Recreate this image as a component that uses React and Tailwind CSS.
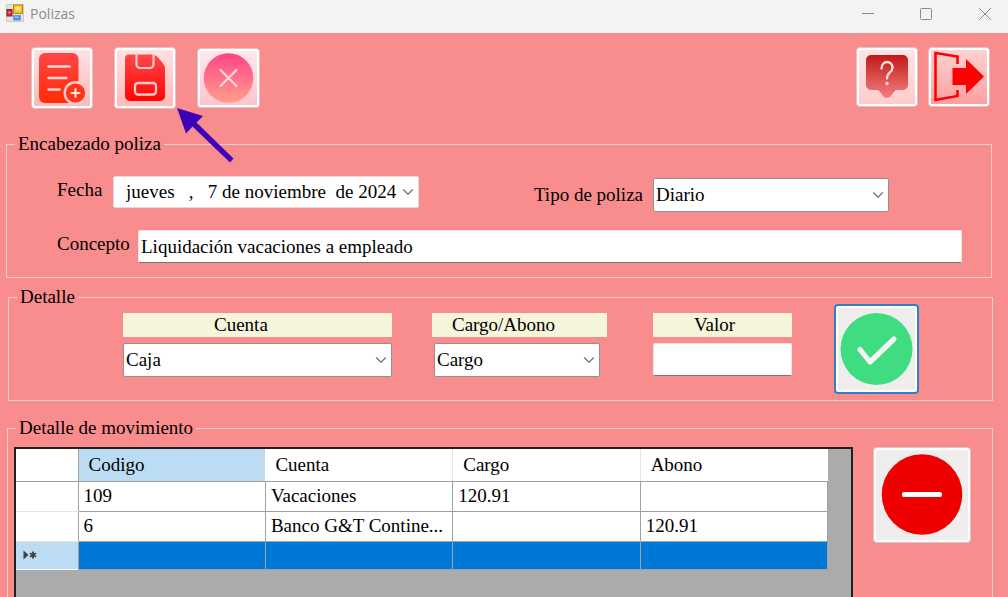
import React from 'react';
import { ChevronDown } from 'lucide-react';

const control = 'rounded-[2px] bg-white text-[19px] text-black outline-none';

function Legend({ children }) {
  return <legend className="ml-[8px] px-[3px] text-[19px] leading-[14px]">{children}</legend>;
}

function Combo({ id, options, className }) {
  return (
    <div className={`grid items-center ${className}`}>
      <select
        id={id}
        className={`${control} col-start-1 row-start-1 h-[34px] w-full appearance-none border border-[#949090] pr-8 pl-[2px]`}
      >
        {options.map((o) => (
          <option key={o}>{o}</option>
        ))}
      </select>
      <Chevron className="col-start-1 row-start-1 mr-[2px] justify-self-end" />
    </div>
  );
}

function Chevron({ className }) {
  return <ChevronDown size={18} strokeWidth={1.5} className={`pointer-events-none text-[#707070] ${className}`} />;
}

function ToolButton({ label, className, children }) {
  return (
    <button
      type="button"
      aria-label={label}
      className={`flex shrink-0 items-center justify-center rounded-[4px] border border-[#dcc4c4] bg-white p-[2px] ${className}`}
    >
      {children}
    </button>
  );
}

function TitleBar() {
  return (
    <header className="flex h-[33px] items-center bg-[#f3f3f3] pl-[6px] font-['Open_Sans',sans-serif] text-sm text-[#8c8c8c]">
      <svg width="18" height="18" viewBox="0 0 18 18" className="mb-[7px] shrink-0">
        <rect x="0.5" y="0.5" width="17" height="17" fill="#e2e2e2" stroke="#cccccc" />
        <rect x="7.5" y="1" width="9" height="8.500" fill="#f4c51c" stroke="#b58a12" />
        <rect x="9.5" y="2.5" width="5" height="4" fill="#ffe678" />
        <rect x="1" y="5.500" width="5" height="6.500" fill="#b8342c" stroke="#8e201c" />
        <rect x="2.500" y="7.500" width="2" height="2" fill="#ee9a90" />
        <rect x="7.500" y="11.500" width="7" height="4.500" fill="#4d8cf0" stroke="#6c9ce4" />
        <rect x="8.5" y="12.5" width="4" height="1.5" fill="#9cc2ff" />
      </svg>
      <h1 className="mb-[6px] ml-[6px] grow">Polizas</h1>
      <div className="mb-[5px] flex items-center">
        <button type="button" aria-label="Minimizar" className="flex w-[58px] justify-center">
          <svg width="12" height="12" stroke="#8c8c8c"><path d="M0 5.5h12" /></svg>
        </button>
        <button type="button" aria-label="Maximizar" className="flex w-[58px] justify-center">
          <svg width="12" height="12" stroke="#8c8c8c" fill="none"><rect x="0.5" y="0.5" width="11" height="11" rx="1" /></svg>
        </button>
        <button type="button" aria-label="Cerrar" className="flex w-[53px] justify-center pl-[6px]">
          <svg width="12" height="12" stroke="#8c8c8c"><path d="M0 0L12 12M12 0L0 12" /></svg>
        </button>
      </div>
    </header>
  );
}

function Toolbar() {
  return (
    <div className="flex items-start pt-[14px] pr-[18px] pl-[31px]">
      <ToolButton label="Nueva poliza" className="size-[62px]">
        <svg width="56" height="56" viewBox="0 0 56 56">
          <defs>
            <linearGradient id="pinkBg" x1="0" y1="0" x2="0" y2="1"><stop stopColor="#ffe2e2" /><stop offset="1" stopColor="#ffb8b8" /></linearGradient>
            <linearGradient id="doc" x1="0" y1="0" x2="0" y2="1"><stop stopColor="#ff4545" /><stop offset="1" stopColor="#ff2c08" /></linearGradient>
          </defs>
          <rect width="56" height="56" fill="url(#pinkBg)" />
          <rect x="5" y="3" width="39.500" height="50" rx="6" fill="url(#doc)" />
          <path d="M14.500 16.500h21M14.500 28h18M14.500 39.500h11" stroke="#ffd6d2" strokeWidth="2.400" strokeLinecap="round" />
          <circle cx="41.500" cy="43" r="10.800" fill="#ff3516" stroke="#ffcaca" strokeWidth="2.400" />
          <path d="M41.500 39v8M37.500 43h8" stroke="#ffe4e0" strokeWidth="2.200" strokeLinecap="round" />
        </svg>
      </ToolButton>
      <div className="relative ml-[21px]">
        <ToolButton label="Guardar" className="size-[62px]">
          <svg width="56" height="56" viewBox="0 0 56 56">
            <defs>
              <linearGradient id="disk" x1="0" y1="0" x2="0" y2="1"><stop stopColor="#ff4848" /><stop offset="1" stopColor="#ff0404" /></linearGradient>
            </defs>
            <rect width="56" height="56" fill="url(#pinkBg)" />
            <path d="M12 4.500H36.500C39 4.500 48 14.500 48 17.500V46a5 5 0 0 1-5 5H13a5 5 0 0 1-5-5V8.500a4 4 0 0 1 4-4Z" fill="url(#disk)" />
            <path d="M19.500 4.500v10a3.500 3.500 0 0 0 3.500 3.500h10a3.500 3.500 0 0 0 3.500-3.500v-10" fill="none" stroke="#ffd0d0" strokeWidth="2.200" />
            <rect x="18" y="33" width="21" height="11.500" rx="3" fill="none" stroke="#ffcaca" strokeWidth="2.300" />
          </svg>
        </ToolButton>
        <svg width="58" height="56" viewBox="0 0 58 56" className="pointer-events-none absolute top-[60px] left-[62px] z-10" fill="#3c00b8">
          <path d="M1 1L27 9L20.500 15.500L57.500 51.500L54 55.500L16.500 19.500L10 26.500Z" />
        </svg>
      </div>
      <ToolButton label="Cancelar" className="mt-px ml-[21px] h-[60px] w-[63px]">
        <svg width="57" height="54" viewBox="0 0 57 54">
          <defs>
            <linearGradient id="cancelBg" x1="0" y1="0" x2="0" y2="1"><stop stopColor="#ffe8ee" /><stop offset="1" stopColor="#ffc4cc" /></linearGradient>
            <linearGradient id="cancel" x1="0" y1="0" x2="0" y2="1"><stop stopColor="#ff4488" /><stop offset="1" stopColor="#ff9e8a" /></linearGradient>
          </defs>
          <rect width="57" height="54" fill="url(#cancelBg)" />
          <circle cx="28.500" cy="27" r="24.800" fill="url(#cancel)" />
          <path d="M20.500 19L36.500 35M36.500 19L20.500 35" stroke="#ffd8de" strokeWidth="2.200" strokeLinecap="round" />
        </svg>
      </ToolButton>
      <div className="ml-auto flex gap-[10px]">
        <ToolButton label="Ayuda" className="h-[60px] w-[62px]">
          <svg width="56" height="54" viewBox="0 0 56 54">
            <defs>
              <linearGradient id="help" x1="0" y1="0" x2="0" y2="1"><stop stopColor="#c01818" /><stop offset="1" stopColor="#f48080" /></linearGradient>
              <linearGradient id="helpBg" x1="0" y1="0" x2="0" y2="1"><stop stopColor="#ffe4e2" /><stop offset="1" stopColor="#ffcccc" /></linearGradient>
            </defs>
            <rect width="56" height="54" fill="url(#helpBg)" />
            <path d="M12 5H44a5 5 0 0 1 5 5V35a5 5 0 0 1-5 5H38C34 40 33 48 28 48S22 40 18 40H12a5 5 0 0 1-5-5V10a5 5 0 0 1 5-5Z" fill="url(#help)" />
            <path d="M22.500 18.500C22.500 10 33.500 10 33.500 17.500C33.500 23 28 22 28 28.500" stroke="#ffd8d4" strokeWidth="2.300" fill="none" strokeLinecap="round" />
            <circle cx="28" cy="33.500" r="1.700" fill="#ffd8d4" />
          </svg>
        </ToolButton>
        <ToolButton label="Salir" className="h-[60px] w-[62px]">
          <svg width="56" height="54" viewBox="0 0 56 54">
            <defs>
              <linearGradient id="exitBg" x1="0" y1="0" x2="0" y2="1"><stop stopColor="#ffd2d2" /><stop offset="1" stopColor="#ff9e9e" /></linearGradient>
            </defs>
            <rect width="56" height="54" fill="url(#exitBg)" />
            <path d="M26.500 14V6.500L4.500 3V50L26.500 46V40" fill="none" stroke="#ff0000" strokeWidth="2.600" />
            <path d="M21.500 18H35V9L53 26.500L35 44V35H21.500Z" fill="#ff0000" />
          </svg>
        </ToolButton>
      </div>
    </div>
  );
}

function Encabezado() {
  return (
    <fieldset className="mt-[28px] mr-[16px] ml-[6px] min-w-0 border border-[#f3cccc]">
      <Legend>Encabezado poliza</Legend>
      <div className="pt-[25px] pr-[29px] pb-[14px]">
        <div className="flex items-start">
          <label htmlFor="fecha" className="ml-[50px] w-[56px] leading-[28px]">Fecha</label>
          <div className="grid w-[306px] items-center">
            <input
              id="fecha"
              defaultValue={'jueves   ,   7 de noviembre  de 2024'}
              className={`${control} col-start-1 row-start-1 h-[32px] w-full border border-[#e8d8d8] pr-[18px] pl-[12px]`}
            />
            <button type="button" aria-label="Abrir calendario" className="col-start-1 row-start-1 mr-[2px] justify-self-end">
              <Chevron className="" />
            </button>
          </div>
          <div className="mt-[2px] ml-auto flex pr-[73px]">
            <label htmlFor="tipo" className="mr-[10px] leading-[34px]">Tipo de poliza</label>
            <Combo id="tipo" options={['Diario', 'Ingreso', 'Egreso']} className="w-[236px]" />
          </div>
        </div>
        <div className="mt-[18px] flex">
          <label htmlFor="concepto" className="ml-[50px] w-[81px] leading-[28px]">Concepto</label>
          <input
            id="concepto"
            defaultValue="Liquidación vacaciones a empleado"
            className={`${control} h-[33px] min-w-0 grow border border-[#f3e4e4] border-b-[#777777] px-[2px]`}
          />
        </div>
      </div>
    </fieldset>
  );
}

function Detalle() {
  return (
    <fieldset className="mt-[12px] mr-[15px] ml-[8px] min-w-0 border border-[#f3cccc]">
      <Legend>Detalle</Legend>
      <div className="grid grid-cols-[269fr_181fr_141fr_85px] items-start gap-x-[40px] pr-[73px] pb-[6px] pl-[114px]">
        <div className="flex flex-col gap-[6px] pt-[9px]">
          <label htmlFor="cuenta" className="bg-[#f5f5dc] pl-[91px] leading-6">Cuenta</label>
          <Combo id="cuenta" options={['Caja', 'Banco G&T Continental', 'Vacaciones']} className="w-full" />
        </div>
        <div className="flex flex-col gap-[6px] pt-[9px]">
          <label htmlFor="cargo" className="mr-[6px] bg-[#f5f5dc] pl-[20px] leading-6">Cargo/Abono</label>
          <Combo id="cargo" options={['Cargo', 'Abono']} className="mr-[13px] ml-[2px]" />
        </div>
        <div className="mr-[2px] flex flex-col gap-[6px] pt-[9px]">
          <label htmlFor="valor" className="bg-[#f5f5dc] pl-[41px] leading-6">Valor</label>
          <input id="valor" className={`${control} h-[33px] w-full border border-[#f3e4e4] border-b-[#777777] px-[2px]`} />
        </div>
        <button type="button" aria-label="Agregar movimiento" className="flex h-[90px] items-center justify-center rounded-[4px] border-2 border-[#2f80cc] bg-white p-[2px]">
          <svg viewBox="0 0 77 82" className="size-full">
            <rect width="77" height="82" fill="#efeeec" />
            <circle cx="38.500" cy="41" r="36" fill="#3fdc82" />
            <path d="M22 41.500L32 54L56 31" fill="none" stroke="#f4f4f4" strokeWidth="5.200" strokeLinecap="round" strokeLinejoin="round" />
          </svg>
        </button>
      </div>
    </fieldset>
  );
}

const rows = [
  ['109', 'Vacaciones', '120.91', ''],
  ['6', 'Banco G&T Contine...', '', '120.91'],
];

function Movimiento() {
  return (
    <fieldset className="mt-[20px] mr-[15px] ml-[7px] min-w-0 grow border border-b-0 border-[#f3cccc]">
      <Legend>Detalle de movimiento</Legend>
      <div className="flex items-start gap-[20px] pt-[12px] pr-[21px] pl-[6px]">
        <div className="min-h-[150px] min-w-0 grow border-2 border-b-0 border-[#202020] bg-[#ababab] pr-[23px]">
          <table className="w-full table-fixed border-collapse bg-white text-left">
            <thead>
              <tr className="h-[32px]">
                <th className="w-[62px] border-r border-b border-[#a0a0a0]" aria-label="Fila" />
                <th className="border-b border-[#a0a0a0] bg-[#bcdcf4] pl-[10px] font-normal">Codigo</th>
                <th className="border-r border-b border-r-[#e5e5e5] border-b-[#a0a0a0] pl-[10px] font-normal">Cuenta</th>
                <th className="border-r border-b border-r-[#e5e5e5] border-b-[#a0a0a0] pl-[10px] font-normal">Cargo</th>
                <th className="border-b border-[#a0a0a0] pl-[10px] font-normal">Abono</th>
              </tr>
            </thead>
            <tbody>
              {rows.map((r) => (
                <tr key={r[0]} className="h-[30px]">
                  <th className="border-r border-b border-r-[#a0a0a0] border-b-[#e3e3e3]" aria-label={`Fila ${r[0]}`} />
                  {r.map((c, i) => (
                    <td key={i} className="border-r border-b border-[#a0a0a0] pl-[5px] whitespace-nowrap">{c}</td>
                  ))}
                </tr>
              ))}
              <tr className="h-[28px] bg-[#0078d7]">
                <th className="border-r border-[#a0a0a0] bg-[#bcdcf4]" aria-label="Fila nueva">
                  <svg width="14" height="10" viewBox="0 0 14 10" className="ml-[7px]" fill="#404040" stroke="#404040">
                    <path d="M0.500 0.500V9.500L5.500 5Z" stroke="none" />
                    <path d="M10 1.500V8.500M7 3.200L13 6.800M13 3.200L7 6.800" strokeWidth="1.800" />
                  </svg>
                </th>
                {[0, 1, 2, 3].map((i) => (
                  <td key={i} className="border-r border-b border-[#a0a0a0]" />
                ))}
              </tr>
            </tbody>
          </table>
        </div>
        <button type="button" aria-label="Quitar movimiento" className="flex h-[96px] w-[98px] shrink-0 items-center justify-center rounded-[4px] border border-[#dcc4c4] bg-white p-[2px]">
          <svg width="92" height="90" viewBox="0 0 92 90">
            <rect width="92" height="90" fill="#efeeec" />
            <circle cx="46" cy="44.500" r="40.300" fill="#ee0000" />
            <path d="M28.500 44.500H63.500" stroke="#ffffff" strokeWidth="5.200" strokeLinecap="round" />
          </svg>
        </button>
      </div>
    </fieldset>
  );
}

export default function App() {
  return (
    <div className="flex min-h-screen flex-col bg-[#f98d8d] font-['Liberation_Serif',serif] text-[19px] text-black">
      <TitleBar />
      <main className="flex grow flex-col">
        <Toolbar />
        <Encabezado />
        <Detalle />
        <Movimiento />
      </main>
    </div>
  );
}
